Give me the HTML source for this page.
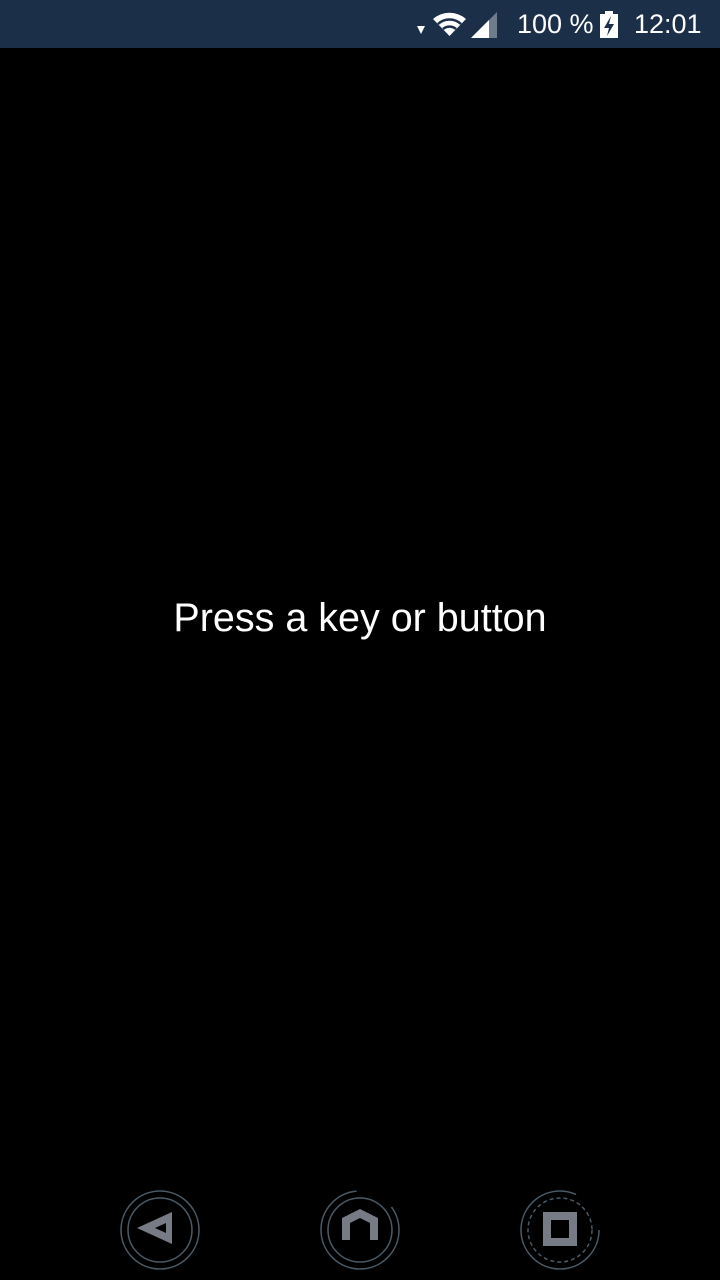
<!DOCTYPE html><html><head><style>
body{margin:0;width:720px;height:1280px;background:#000;position:relative;overflow:hidden;font-family:"Liberation Sans",sans-serif}
.sb{position:absolute;left:0;top:0;width:720px;height:48px;background:#1c2f48;color:#fff}
.t{position:absolute;top:9px;font-size:27px;line-height:30px}
.msg{position:absolute;top:596px;width:720px;text-align:center;color:#fff;font-size:39.5px}
</style></head><body>
<div class="sb">
<svg style="position:absolute;left:0;top:0" width="720" height="48">
<polygon points="417,26 425,26 421,34" fill="#fff"/>
<path d="M433,19 A25,25 0 0 1 466,19 L449.5,36 Z" fill="#fff"/>
<g stroke="#1c2f48" stroke-width="2.5" fill="none"><path d="M438,24 A17,17 0 0 1 461,24"/><path d="M443,29 A10,10 0 0 1 456,29"/></g>
<path d="M471,38 L497,12 L497,38 Z" fill="#6f7c8c"/>
<path d="M471,38 L489,20 L489,38 Z" fill="#fff"/>
<rect x="600" y="14" width="18" height="24" fill="#fff"/><rect x="605" y="11" width="8" height="4" fill="#fff"/>
<polygon points="611,16 604,28 609,28 607,36 614,24 609,24" fill="#1c2f48"/>
</svg>
<div class="t" style="left:517px">100 %</div>
<div class="t" style="left:634px">12:01</div>
</div>
<div class="msg">Press a key or button</div>
<svg style="position:absolute;left:0;top:1180px" width="720" height="100" fill="none">
<g stroke="#4a5a66" stroke-width="1.5">
<circle cx="160" cy="50" r="39"/>
<circle cx="160" cy="50" r="32"/>
<circle cx="360" cy="50" r="39" stroke-dasharray="180 40"/>
<circle cx="360" cy="50" r="32"/>
<circle cx="560" cy="50" r="39" stroke-dasharray="200 45"/>
<circle cx="560" cy="50" r="32" stroke-dasharray="4 3"/>
</g>
<polygon points="137,48 172,32 172,64" fill="#777b86"/>
<polygon points="155,48 166,43 166,53" fill="#000"/>
<path d="M342,60 L342,38 L360,29 L378,38 L378,60 L370,60 L370,43 L360,38 L350,43 L350,60 Z" fill="#777b86"/>
<rect x="543" y="32" width="34" height="34" fill="#777b86"/>
<rect x="551" y="40" width="18" height="18" fill="#000"/>
</svg>
</body></html>
